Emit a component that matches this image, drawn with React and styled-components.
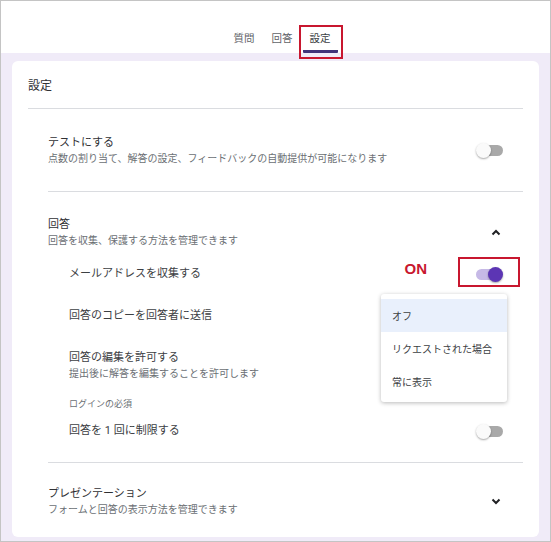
import React from 'react';
import styled, { createGlobalStyle } from 'styled-components';

const GlobalStyle = createGlobalStyle`
  html, body {
    margin: 0;
    padding: 0;
    background: #ffffff;
  }
  body {
    font-family: Roboto, "Noto Sans CJK JP", sans-serif;
    color: #202124;
  }
  * {
    box-sizing: border-box;
  }
`;

const Frame = styled.div`
  width: 551px;
  height: 542px;
  border: 1px solid #c4c4c4;
  display: flex;
  flex-direction: column;
  overflow: hidden;
`;

const Header = styled.header`
  height: 52px;
  flex-shrink: 0;
  background: #ffffff;
  display: flex;
  justify-content: center;
  align-items: flex-end;
  gap: 3px;
  padding-left: 13px;
  position: relative;
  z-index: 2;
`;

const Tab = styled.div`
  position: relative;
  padding: 0 7px 4px;
  font-size: 10.5px;
  line-height: 14px;
  color: ${p => (p.$active ? '#3c4043' : '#5f6368')};
  border-bottom: 3px solid ${p => (p.$active ? '#41337a' : 'transparent')};
  border-radius: 1px;
`;

/* red annotation frames drawn over the UI */
const Callout = styled.span`
  position: absolute;
  top: ${p => p.$top}px;
  right: ${p => p.$right}px;
  bottom: ${p => p.$bottom}px;
  left: ${p => p.$left}px;
  border: 2px solid #c8172f;
  pointer-events: none;
`;

const Body = styled.main`
  flex: 1;
  background: #f0ebf8;
  padding: 8px 11px 0;
`;

const Card = styled.section`
  background: #ffffff;
  border-radius: 6px;
  padding: 0 16px 20px;
`;

const CardTitle = styled.h1`
  margin: 0;
  padding: 16px 0 13px;
  font-size: 12px;
  line-height: 18px;
  font-weight: 400;
  color: #303134;
  border-bottom: 1px solid #dadce0;
`;

const SectionList = styled.div`
  margin-left: 20px;
`;

const Section = styled.div`
  padding: ${p => p.$pad};
  border-bottom: ${p => (p.$last ? 'none' : '1px solid #dadce0')};
  position: relative;
`;

const Row = styled.div`
  display: flex;
  align-items: center;
  padding-right: 20px;
  position: relative;
`;

const TextBlock = styled.div`
  flex: 1;
  display: flex;
  flex-direction: column;
`;

const Title = styled.div`
  font-size: 11px;
  line-height: 16px;
  color: #303134;
`;

const Subtitle = styled.div`
  margin-top: 1px;
  font-size: 10px;
  line-height: 14px;
  color: #6b6f74;
`;

const SubList = styled.div`
  margin-top: 5px;
  margin-left: 21px;
`;

const SubRow = styled(Row)`
  padding-top: 13px;
  padding-bottom: 13px;
`;

const SubTitle = styled(Title)`
  color: #3c4043;
`;

const GroupLabel = styled.div`
  margin-top: 4px;
  font-size: 9px;
  line-height: 12px;
  color: #6b6f74;
`;

const Switch = styled.span`
  position: relative;
  display: inline-block;
  flex-shrink: 0;
  width: 27px;
  height: 15px;

  &::before {
    content: '';
    position: absolute;
    top: 2px;
    ${p => (p.$on ? 'left: 0;' : 'right: 0;')}
    width: ${p => (p.$on ? 24 : 22)}px;
    height: 11px;
    border-radius: 6px;
    background: ${p => (p.$on ? '#c6b9e6' : '#a9a9a9')};
  }

  &::after {
    content: '';
    position: absolute;
    top: 0;
    ${p => (p.$on ? 'right: 0;' : 'left: 0;')}
    width: 15px;
    height: 15px;
    border-radius: 50%;
    background: ${p => (p.$on ? '#5c35b4' : '#fafafa')};
    box-shadow: 0 1px 2px rgba(0, 0, 0, 0.35);
  }
`;

const ChevronBox = styled.span`
  width: 14px;
  display: flex;
  justify-content: center;
  flex-shrink: 0;
`;

const OnLabel = styled.span`
  position: absolute;
  top: 8px;
  right: 96px;
  font-family: "Liberation Sans", Arial, sans-serif;
  font-weight: 700;
  font-size: 15px;
  line-height: 16px;
  color: #c8172f;
`;

const Menu = styled.ul`
  position: absolute;
  top: 41px;
  right: 16px;
  width: 126px;
  margin: 0;
  padding: 5px 0 4px;
  list-style: none;
  background: #ffffff;
  border-radius: 3px;
  box-shadow: 0 1px 4px rgba(0, 0, 0, 0.28);
  z-index: 5;
`;

const MenuItem = styled.li`
  height: 33px;
  display: flex;
  align-items: center;
  padding-left: 11px;
  font-size: 10px;
  color: #3c4043;
  background: ${p => (p.$selected ? '#e9f0fc' : 'transparent')};
`;

const Chevron = ({ up }) => (
  <ChevronBox>
    <svg width="10" height="7" viewBox="0 0 10 7">
      <polyline
        points={up ? '1.5,5.5 5,2 8.5,5.5' : '1.5,1.5 5,5 8.5,1.5'}
        fill="none"
        stroke="#202124"
        strokeWidth="2"
      />
    </svg>
  </ChevronBox>
);

export default function App() {
  return (
    <>
      <GlobalStyle />
      <Frame>
        <Header>
          <Tab>質問</Tab>
          <Tab>回答</Tab>
          <Tab $active>
            設定
            <Callout $top={-7} $right={-5} $bottom={-9} $left={-4} />
          </Tab>
        </Header>
        <Body>
          <Card>
            <CardTitle>設定</CardTitle>
            <SectionList>
              <Section $pad="26px 0 25px">
                <Row>
                  <TextBlock>
                    <Title>テストにする</Title>
                    <Subtitle>点数の割り当て、解答の設定、フィードバックの自動提供が可能になります</Subtitle>
                  </TextBlock>
                  <Switch />
                </Row>
              </Section>

              <Section $pad="25px 0 10px">
                <Row>
                  <TextBlock>
                    <Title>回答</Title>
                    <Subtitle>回答を収集、保護する方法を管理できます</Subtitle>
                  </TextBlock>
                  <Chevron up />
                </Row>
                <SubList>
                  <SubRow>
                    <TextBlock>
                      <SubTitle>メールアドレスを収集する</SubTitle>
                    </TextBlock>
                    <OnLabel>ON</OnLabel>
                    <Switch $on>
                      <Callout $top={-10} $right={-17} $bottom={-5} $left={-18} />
                    </Switch>
                    <Menu>
                      <MenuItem $selected>オフ</MenuItem>
                      <MenuItem>リクエストされた場合</MenuItem>
                      <MenuItem>常に表示</MenuItem>
                    </Menu>
                  </SubRow>
                  <SubRow>
                    <TextBlock>
                      <SubTitle>回答のコピーを回答者に送信</SubTitle>
                    </TextBlock>
                  </SubRow>
                  <SubRow>
                    <TextBlock>
                      <SubTitle>回答の編集を許可する</SubTitle>
                      <Subtitle>提出後に解答を編集することを許可します</Subtitle>
                    </TextBlock>
                  </SubRow>
                  <GroupLabel>ログインの必須</GroupLabel>
                  <SubRow>
                    <TextBlock>
                      <SubTitle>回答を 1 回に制限する</SubTitle>
                    </TextBlock>
                    <Switch />
                  </SubRow>
                </SubList>
              </Section>

              <Section $pad="23px 0 0" $last>
                <Row>
                  <TextBlock>
                    <Title>プレゼンテーション</Title>
                    <Subtitle>フォームと回答の表示方法を管理できます</Subtitle>
                  </TextBlock>
                  <Chevron />
                </Row>
              </Section>
            </SectionList>
          </Card>
        </Body>
      </Frame>
    </>
  );
}
